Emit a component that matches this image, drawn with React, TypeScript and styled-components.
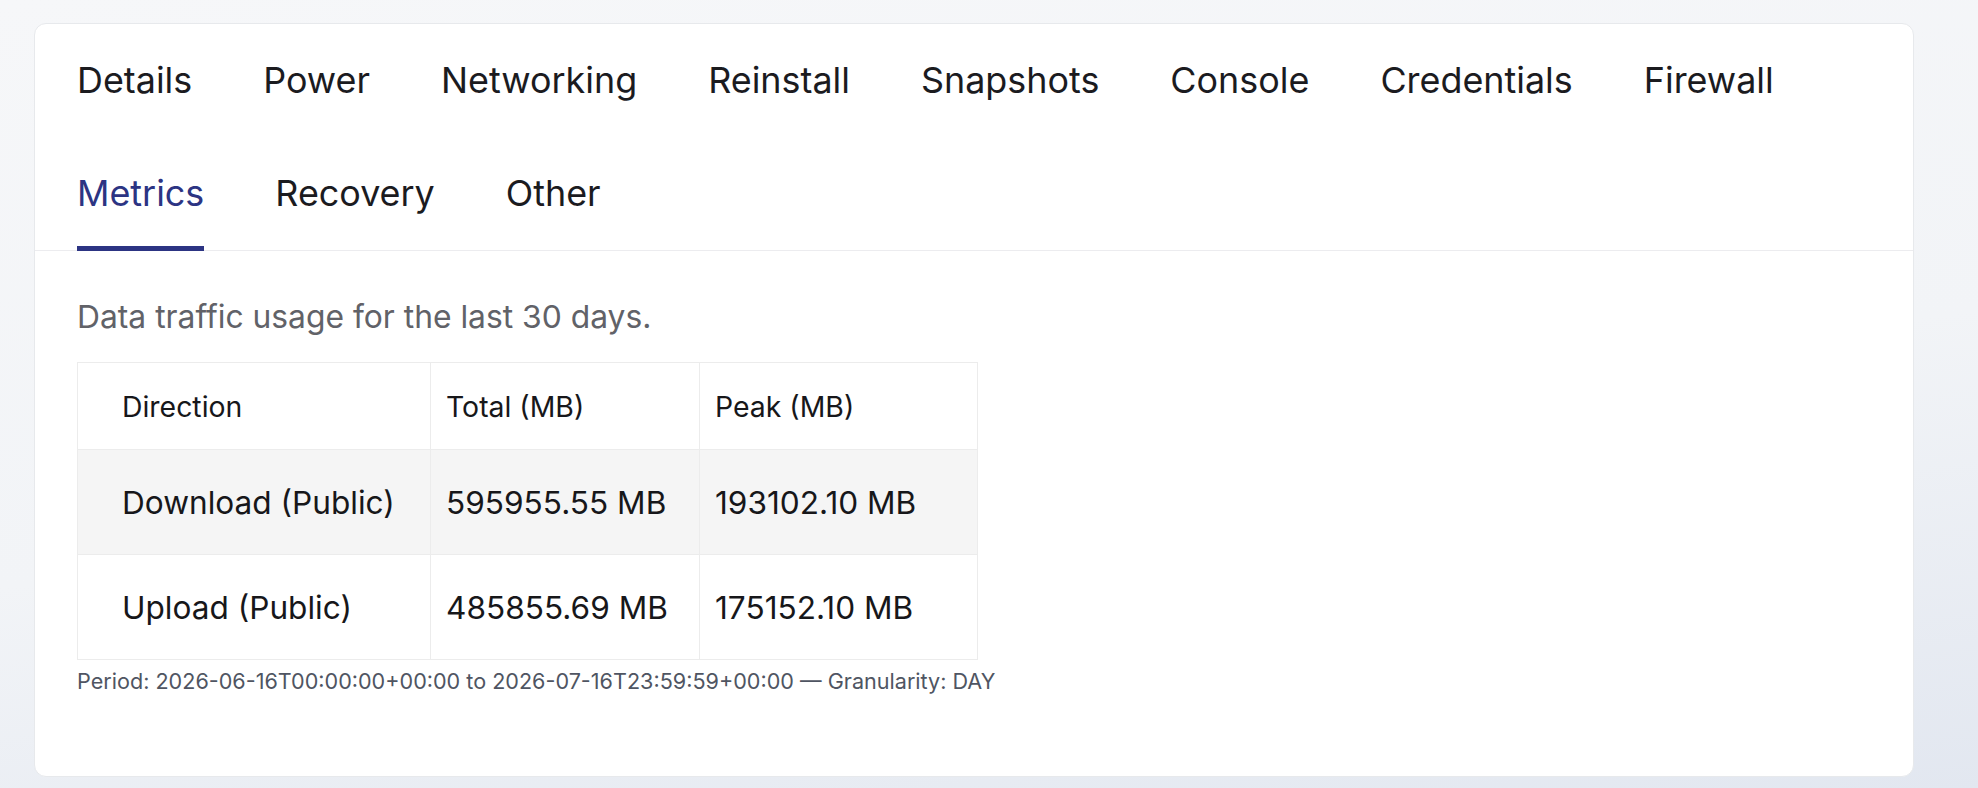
import React from 'react';
import styled, { createGlobalStyle } from 'styled-components';

const GlobalStyle = createGlobalStyle`
  html, body {
    margin: 0;
    padding: 0;
  }
  body {
    font-family: Inter, "Noto Sans", "Liberation Sans", sans-serif;
    background: linear-gradient(172deg, #f6f7f9 0%, #f2f4f7 55%, #e2e7f0 100%);
    min-height: 788px;
    color: #1b1b1f;
  }
`;

const Page = styled.div`
  padding: 23px 64px 14px 34px;
`;

const Card = styled.section`
  background: #ffffff;
  border: 1px solid #e7e9ec;
  border-radius: 12px;
  overflow: hidden;
`;

const TabList = styled.nav`
  display: flex;
  flex-wrap: wrap;
  column-gap: 71px;
  padding: 0 42px;
  border-bottom: 1px solid #ececef;
`;

const Tab = styled.button<{ $active?: boolean }>`
  position: relative;
  margin-bottom: -1px;
  padding: 30px 0 31px;
  border: 0;
  background: none;
  font-family: inherit;
  font-size: 35.9px;
  line-height: 53px;
  font-weight: 400;
  color: ${p => (p.$active ? '#2c3483' : '#1b1b1f')};
  cursor: pointer;

  &::after {
    content: '';
    position: absolute;
    left: 0;
    right: 0;
    bottom: 0;
    height: 5px;
    background: ${p => (p.$active ? '#2c3483' : 'transparent')};
  }
`;

const Body = styled.div`
  padding: 46px 42px 82px;
`;

const Intro = styled.p`
  margin: 0 0 26px;
  font-size: 31.8px;
  color: #616268;
`;

const Table = styled.table`
  width: 900px;
  table-layout: fixed;
  border-collapse: collapse;
  border: 1px solid #ececec;
`;

const HeadRow = styled.tr`
  height: 87px;
`;

const Row = styled.tr<{ $striped?: boolean }>`
  height: 105px;
  background: ${p => (p.$striped ? '#f5f5f5' : '#ffffff')};
`;

const Th = styled.th`
  padding: 0 15px;
  border: 1px solid #ececec;
  text-align: left;
  font-size: 28.4px;
  font-weight: 400;
  color: #17171a;

  &:first-child {
    padding-left: 44px;
  }
`;

const Td = styled.td`
  padding: 0 15px;
  border: 1px solid #ececec;
  font-size: 31.6px;
  color: #17171a;
  white-space: nowrap;

  &:first-child {
    padding-left: 44px;
  }
`;

const Note = styled.p`
  margin: 8px 0 0;
  font-size: 21.6px;
  color: #4f5562;
`;

const tabs = [
  'Details',
  'Power',
  'Networking',
  'Reinstall',
  'Snapshots',
  'Console',
  'Credentials',
  'Firewall',
  'Metrics',
  'Recovery',
  'Other',
];

const traffic = [
  { direction: 'Download (Public)', total: '595955.55 MB', peak: '193102.10 MB' },
  { direction: 'Upload (Public)', total: '485855.69 MB', peak: '175152.10 MB' },
];

export default function App() {
  const active = 'Metrics';

  return (
    <>
      <GlobalStyle />
      <Page>
        <Card>
          <TabList>
            {tabs.map(t => (
              <Tab key={t} $active={t === active}>
                {t}
              </Tab>
            ))}
          </TabList>

          <Body>
            <Intro>Data traffic usage for the last 30 days.</Intro>
            <Table>
              <colgroup>
                <col style={{ width: 353 }} />
                <col style={{ width: 269 }} />
                <col style={{ width: 278 }} />
              </colgroup>
              <thead>
                <HeadRow>
                  <Th>Direction</Th>
                  <Th>Total (MB)</Th>
                  <Th>Peak (MB)</Th>
                </HeadRow>
              </thead>
              <tbody>
                {traffic.map((r, i) => (
                  <Row key={r.direction} $striped={i % 2 === 0}>
                    <Td>{r.direction}</Td>
                    <Td>{r.total}</Td>
                    <Td>{r.peak}</Td>
                  </Row>
                ))}
              </tbody>
            </Table>
            <Note>
              Period: 2026-06-16T00:00:00+00:00 to 2026-07-16T23:59:59+00:00 — Granularity: DAY
            </Note>
          </Body>
        </Card>
      </Page>
    </>
  );
}
